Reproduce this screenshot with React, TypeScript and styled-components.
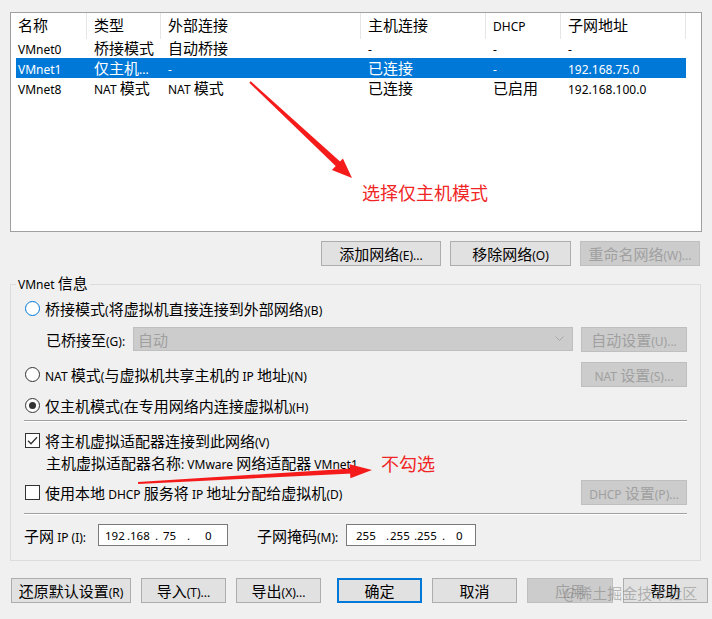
import React from 'react';
import styled, { createGlobalStyle, css } from 'styled-components';

const GlobalStyle = createGlobalStyle`
  html, body {
    margin: 0;
    padding: 0;
    background: #f0f0f0;
  }
  body {
    font-family: "Noto Sans CJK SC", "Noto Sans", sans-serif;
    font-size: 15px;
    color: #000;
  }
`;

const CJK = /([\u2e80-\u9fff\u3000-\u303f\uff00-\uffef]+)/;

// YaHei draws latin letters smaller than the CJK ones, so latin runs get their own span
function Mixed({ text }: { text: string }) {
  return (
    <span>
      {text.split(CJK).map((part, i) =>
        part === '' ? null : CJK.test(part) ? (
          <span key={i}>{part}</span>
        ) : (
          <Lat key={i}>{part}</Lat>
        )
      )}
    </span>
  );
}

const networks = [
  ['VMnet0', '桥接模式', '自动桥接', '-', '-', '-'],
  ['VMnet1', '仅主机...', '-', '已连接', '-', '192.168.75.0'],
  ['VMnet8', 'NAT 模式', 'NAT 模式', '已连接', '已启用', '192.168.100.0'],
];

const headers = ['名称', '类型', '外部连接', '主机连接', 'DHCP', '子网地址'];

const ipSegments: [string, number][] = [
  ['', 6],
  ['192', 22],
  ['.', 3],
  ['168', 25],
  ['.', 8],
  ['75', 24],
  ['.', 18],
  ['0', 20],
];

const maskSegments: [string, number][] = [
  ['', 9],
  ['255', 30],
  ['.', 4],
  ['255', 24],
  ['.', 3],
  ['255', 25],
  ['.', 14],
  ['0', 20],
];

function IpBox({ segments }: { segments: [string, number][] }) {
  return (
    <IpField>
      {segments.map(([t, w], i) => (
        <Seg key={i} $w={w}>
          {t}
        </Seg>
      ))}
    </IpField>
  );
}

function Radio({ checked, focused, label }: { checked?: boolean; focused?: boolean; label: string }) {
  return (
    <ChoiceLabel>
      <RadioDot $focused={focused}>{checked && <RadioFill />}</RadioDot>
      <Mixed text={label} />
    </ChoiceLabel>
  );
}

function Check({ checked, label }: { checked?: boolean; label: string }) {
  return (
    <ChoiceLabel>
      <CheckBox>
        {checked && (
          <svg width='13' height='13' viewBox='0 0 13 13'>
            <path d='M2 6.8 L5 9.8 L11 3.2' fill='none' stroke='#333' strokeWidth='1.3' />
          </svg>
        )}
      </CheckBox>
      <Mixed text={label} />
    </ChoiceLabel>
  );
}

const App = () => {
  return (
    <Window>
      <GlobalStyle />
      <ListBox>
        <HeaderRow>
          {headers.map((h) => (
            <HeaderCell key={h}>
              <Mixed text={h} />
            </HeaderCell>
          ))}
        </HeaderRow>
        {networks.map((row, r) => (
          <DataRow key={row[0]} $selected={r === 1}>
            {row.map((c, i) => (
              <Cell key={i} $first={i === 0}>
                <Mixed text={c} />
              </Cell>
            ))}
          </DataRow>
        ))}
      </ListBox>

      <ListButtons>
        <Button $w={120}>
          <Mixed text='添加网络(E)...' />
        </Button>
        <Button $w={121}>
          <Mixed text='移除网络(O)' />
        </Button>
        <Button $w={120} disabled>
          <Mixed text='重命名网络(W)...' />
        </Button>
      </ListButtons>

      <Group>
        <Legend>
          <Mixed text='VMnet 信息' />
        </Legend>
        <GroupBody>
          <Row $top={1} $h={24}>
            <Radio focused label='桥接模式(将虚拟机直接连接到外部网络)(B)' />
          </Row>
          <Row $top={7} $h={24}>
            <Indented $w={87}>
              <Mixed text='已桥接至(G):' />
            </Indented>
            <Dropdown>
              <span>自动</span>
              <svg width='9' height='6' viewBox='0 0 9 6'>
                <path d='M0.5 0.5 L4.5 4.5 L8.5 0.5' fill='none' stroke='#a8a8a8' strokeWidth='1' />
              </svg>
            </Dropdown>
            <Button $w={106} disabled>
              <Mixed text='自动设置(U)...' />
            </Button>
          </Row>
          <Row $top={11} $h={25}>
            <Radio label='NAT 模式(与虚拟机共享主机的 IP 地址)(N)' />
            <Spacer />
            <Button $w={106} disabled>
              <Mixed text='NAT 设置(S)...' />
            </Button>
          </Row>
          <Row $top={6} $h={24}>
            <Radio checked label='仅主机模式(在专用网络内连接虚拟机)(H)' />
          </Row>
          <Divider $top={3} />
          <Row $top={6} $h={24}>
            <Check checked label='将主机虚拟适配器连接到此网络(V)' />
          </Row>
          <Row $top={0} $h={20}>
            <Indented>
              <Mixed text='主机虚拟适配器名称: VMware 网络适配器 VMnet1' />
            </Indented>
          </Row>
          <Row $top={7} $h={26}>
            <Check label='使用本地 DHCP 服务将 IP 地址分配给虚拟机(D)' />
            <Spacer />
            <Button $w={106} disabled>
              <Mixed text='DHCP 设置(P)...' />
            </Button>
          </Row>
          <Divider $top={8} />
          <Row $top={9} $h={22}>
            <FieldLabel $w={74}>
              <Mixed text='子网 IP (I):' />
            </FieldLabel>
            <IpBox segments={ipSegments} />
            <FieldLabel $w={89} $gap={29}>
              <Mixed text='子网掩码(M):' />
            </FieldLabel>
            <IpBox segments={maskSegments} />
          </Row>
        </GroupBody>
      </Group>

      <BottomBar>
        <Button $w={120}>
          <Mixed text='还原默认设置(R)' />
        </Button>
        <Button $w={85}>
          <Mixed text='导入(T)...' />
        </Button>
        <Button $w={85}>
          <Mixed text='导出(X)...' />
        </Button>
        <Button $w={85} $default $gap={6}>
          确定
        </Button>
        <Button $w={85}>取消</Button>
        <Button $w={86} disabled>
          应用
        </Button>
        <Button $w={85}>帮助</Button>
      </BottomBar>

      <Arrows width='712' height='619' viewBox='0 0 712 619'>
        <polygon points='249.3,82.7 250.7,81.3 340.6,161.9 336.2,166.6' fill='#f51b1b' />
        <polygon points='352,178 331.9,170.1 342.9,158.5' fill='#f51b1b' />
        <polygon points='138,482 138.1,484 352.2,473.5 351.9,468.5' fill='#f51b1b' />
        <polygon points='372,470 350.4,478.2 349.6,464.2' fill='#f51b1b' />
      </Arrows>
      <Note $x={362} $y={180}>
        选择仅主机模式
      </Note>
      <Note $x={381} $y={451}>
        不勾选
      </Note>
      <Watermark>@稀土掘金技术社区</Watermark>
    </Window>
  );
};

const Lat = styled.span`
  font-family: 'Noto Sans', sans-serif;
  font-size: 12px;
`;

const Window = styled.div`
  position: relative;
  width: 712px;
  height: 619px;
  box-sizing: border-box;
  padding: 12px 10px 0 10px;
  overflow: hidden;
  background: #f0f0f0;
`;

const ListBox = styled.div`
  width: 692px;
  height: 220px;
  box-sizing: border-box;
  border: 1px solid #a0a0a0;
  background: #fff;
`;

const HeaderRow = styled.div`
  display: grid;
  grid-template-columns: 76px 74px 200px 125px 75px 125px;
  height: 25px;
`;

const HeaderCell = styled.div`
  box-sizing: border-box;
  padding-left: 7px;
  line-height: 24px;
  border-right: 1px solid #e5e5e5;
  white-space: nowrap;
`;

const DataRow = styled.div<{ $selected?: boolean }>`
  display: grid;
  grid-template-columns: 71px 74px 200px 125px 75px 125px;
  width: 670px;
  height: 20px;
  margin-left: 5px;
  line-height: 19px;
  ${(p) =>
    p.$selected &&
    css`
      background: #0078d7;
      color: #fff;
    `}
`;

const Cell = styled.div<{ $first?: boolean }>`
  padding-left: ${(p) => (p.$first ? 2 : 7)}px;
  white-space: nowrap;
  overflow: hidden;
`;

const ListButtons = styled.div`
  display: flex;
  justify-content: flex-end;
  gap: 9px;
  margin-top: 9px;
  padding-right: 2px;
`;

const Button = styled.button<{ $w: number; $default?: boolean; $gap?: number }>`
  width: ${(p) => p.$w}px;
  height: 25px;
  margin: 0 0 0 ${(p) => p.$gap || 0}px;
  padding: 0;
  flex-shrink: 0;
  box-sizing: border-box;
  border: 1px solid #adadad;
  background: #e1e1e1;
  color: #000;
  font-family: inherit;
  font-size: 15px;
  line-height: 23px;
  white-space: nowrap;
  ${(p) =>
    p.$default &&
    css`
      border: 2px solid #0078d7;
      line-height: 21px;
    `}
  &:disabled {
    background: #cccccc;
    border-color: #bfbfbf;
    color: #a0a0a0;
  }
`;

const Group = styled.fieldset`
  width: 691px;
  box-sizing: border-box;
  margin: 7px 0 0 0;
  padding: 0 13px 14px 5px;
  border: 1px solid #dcdcdc;
  min-width: 0;
`;

const Legend = styled.legend`
  padding: 0 2px;
  line-height: 20px;
`;

const GroupBody = styled.div`
  display: flex;
  flex-direction: column;
  padding-left: 9px;
`;

const Row = styled.div<{ $top: number; $h: number }>`
  display: flex;
  align-items: center;
  height: ${(p) => p.$h}px;
  margin-top: ${(p) => p.$top}px;
  white-space: nowrap;
`;

const Spacer = styled.div`
  flex: 1;
`;

const ChoiceLabel = styled.label`
  display: flex;
  align-items: center;
  gap: 5px;
  white-space: nowrap;
`;

const RadioDot = styled.span<{ $focused?: boolean }>`
  display: flex;
  align-items: center;
  justify-content: center;
  width: 15px;
  height: 15px;
  box-sizing: border-box;
  border-radius: 50%;
  border: 1px solid ${(p) => (p.$focused ? '#0078d7' : '#333')};
  background: #fff;
`;

const RadioFill = styled.span`
  width: 7px;
  height: 7px;
  border-radius: 50%;
  background: #333;
`;

const CheckBox = styled.span`
  display: flex;
  align-items: center;
  justify-content: center;
  width: 15px;
  height: 15px;
  box-sizing: border-box;
  border: 1px solid #333;
  background: #fff;
`;

const Indented = styled.div<{ $w?: number }>`
  margin-left: 21px;
  ${(p) => p.$w && `width: ${p.$w}px;`}
  flex-shrink: 0;
`;

const Dropdown = styled.div`
  flex: 1;
  display: flex;
  align-items: center;
  justify-content: space-between;
  height: 24px;
  box-sizing: border-box;
  margin-right: 8px;
  padding: 0 8px 0 4px;
  background: #cccccc;
  border: 1px solid #bfbfbf;
  color: #a0a0a0;
`;

const Divider = styled.div<{ $top: number }>`
  margin-top: ${(p) => p.$top}px;
  height: 1px;
  margin-left: -1px;
  background: #a0a0a0;
  border-bottom: 1px solid #fff;
`;

const FieldLabel = styled.div<{ $w: number; $gap?: number }>`
  width: ${(p) => p.$w}px;
  margin-left: ${(p) => (p.$gap || 0) - (p.$gap ? 0 : 1)}px;
  flex-shrink: 0;
`;

const IpField = styled.div`
  display: flex;
  align-items: center;
  width: 130px;
  height: 22px;
  box-sizing: border-box;
  border: 1px solid #7a7a7a;
  background: #fff;
  font-family: 'Noto Sans', sans-serif;
  font-size: 11.5px;
  overflow: hidden;
`;

const Seg = styled.span<{ $w: number }>`
  width: ${(p) => p.$w}px;
  flex-shrink: 0;
  white-space: pre;
`;

const BottomBar = styled.div`
  display: flex;
  gap: 10px;
  margin-top: 17px;
  padding-left: 1px;
`;

const Arrows = styled.svg`
  position: absolute;
  left: 0;
  top: 0;
  pointer-events: none;
`;

const Note = styled.div<{ $x: number; $y: number }>`
  position: absolute;
  left: ${(p) => p.$x}px;
  top: ${(p) => p.$y}px;
  font-size: 18px;
  line-height: 24px;
  color: #f02626;
`;

const Watermark = styled.div`
  position: absolute;
  left: 563px;
  top: 582px;
  font-size: 15px;
  line-height: 22px;
  color: rgba(110, 110, 110, 0.45);
  pointer-events: none;
`;

export default App;
